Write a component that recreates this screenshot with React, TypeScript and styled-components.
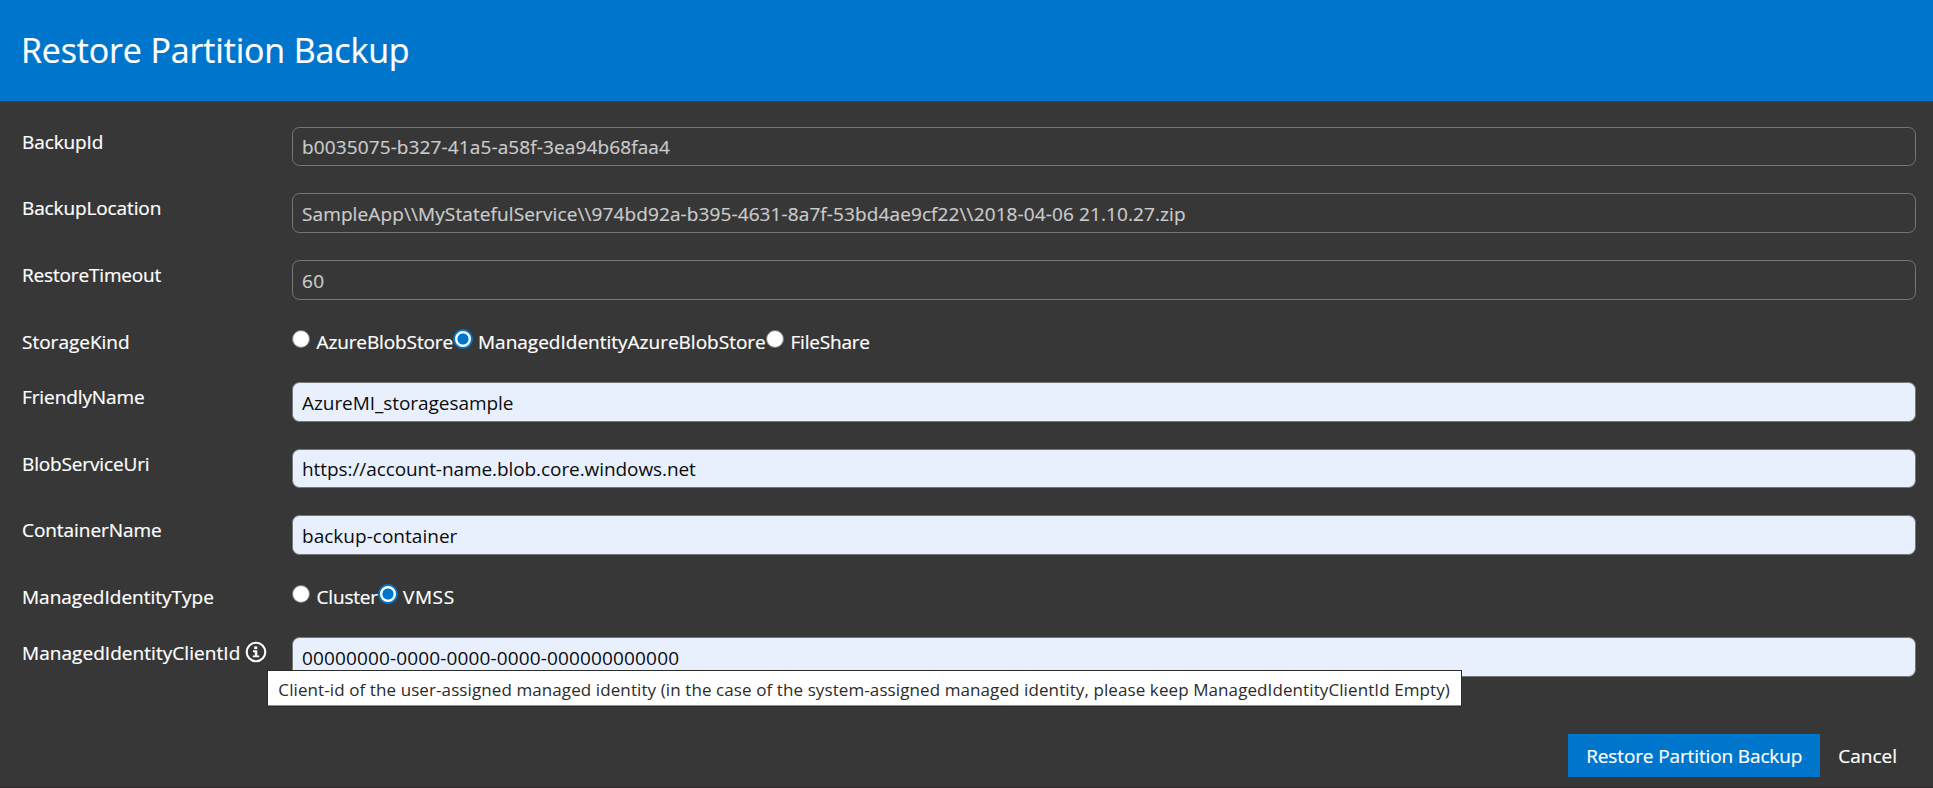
import React, { useState } from "react";
import styled, { createGlobalStyle } from "styled-components";

const GlobalStyle = createGlobalStyle`
  *, *::before, *::after { box-sizing: border-box; }
  body {
    margin: 0;
    background: #373737;
    color: #fff;
    font-family: "Segoe UI", "Open Sans", "Noto Sans", sans-serif;
    font-size: 19px;
    -webkit-text-stroke: 0.2px currentColor;
    overflow: hidden;
  }
`;

const Dialog = styled.main`
  display: flex;
  flex-direction: column;
  width: 100%;
  height: 788px;
  background: #373737;
  border-bottom: 1px solid #302e2f;
`;

const Header = styled.header`
  display: flex;
  align-items: center;
  flex: none;
  height: 101px;
  padding: 0 0 1px 21px;
  background: #0075cc;
`;

const Title = styled.h1`
  margin: 0;
  font-size: 34px;
  line-height: 46px;
  font-weight: 400;
  letter-spacing: -0.15px;
`;

const Form = styled.form`
  display: flex;
  flex: 1;
  flex-direction: column;
  padding: 26px 17px 10px 22px;
`;

const Row = styled.div<{ $height: number }>`
  display: grid;
  grid-template-columns: 270px 1fr;
  align-items: start;
  height: ${(p) => p.$height}px;
`;

const Label = styled.label<{ $tracking?: number; $top?: number }>`
  display: flex;
  align-items: center;
  gap: 5px;
  padding-top: ${(p) => p.$top ?? 1}px;
  line-height: 28px;
  letter-spacing: ${(p) => p.$tracking ?? 0}px;
  white-space: nowrap;
`;

const Input = styled.input<{ $tracking?: number; $height: number }>`
  width: 100%;
  height: ${(p) => p.$height}px;
  margin: 0;
  padding: ${(p) => (p.$height > 39 ? 1 : 0)}px 9px 0;
  border: 1px solid #767676;
  border-radius: 7.5px;
  background: #e8f0fe;
  color: #0c0c0c;
  font: inherit;
  letter-spacing: ${(p) => p.$tracking ?? 0}px;
  -webkit-text-stroke: 0;
  outline: none;

  &:disabled {
    background: transparent;
    border-color: #767676;
    color: #cbcbcb;
    -webkit-text-stroke: 0.2px currentColor;
  }
`;

const RadioGroup = styled.div`
  display: flex;
  align-items: flex-start;
`;

const RadioOption = styled.label<{ $width: number; $tracking?: number }>`
  display: flex;
  align-items: flex-start;
  width: ${(p) => p.$width}px;
  line-height: 28px;
  letter-spacing: ${(p) => p.$tracking ?? 0}px;
  white-space: nowrap;
`;

const RadioInput = styled.input`
  appearance: none;
  flex: none;
  width: 18px;
  height: 18px;
  margin: 3px 6.5px 0 0;
  border: 1px solid #767676;
  border-radius: 50%;
  background: #fff;

  &:checked {
    width: 20px;
    height: 20px;
    margin: 2px 5px 0 -1px;
    border: 2.5px solid #0075cc;
    background: radial-gradient(circle, #0075cc 5.2px, #fff 5.9px);
  }
`;

const RadioText = styled.span`
  padding-top: 1px;
`;

const InfoAnchor = styled.span`
  position: relative;
  display: flex;
  margin-top: -2px;
`;

const Tooltip = styled.span`
  position: absolute;
  top: 29px;
  left: 22px;
  z-index: 2;
  width: 1195px;
  height: 37px;
  padding: 0 0 0 10px;
  border: 1px solid #2b2b2b;
  box-shadow: inset 0 -1px 0 #8e8e8e;
  background: #fff;
  color: #2b2b2b;
  font-size: 17px;
  line-height: 37px;
  letter-spacing: 0.095px;
  -webkit-text-stroke: 0;
`;

const Footer = styled.footer`
  display: flex;
  justify-content: flex-end;
  margin: auto 1px 0 0;
`;

const Button = styled.button<{ $primary?: boolean }>`
  height: 43px;
  padding: 0 18px;
  border: 0;
  background: ${(p) => (p.$primary ? "#0075cc" : "transparent")};
  color: #fff;
  font: inherit;
  letter-spacing: ${(p) => (p.$primary ? -0.13 : 0)}px;
  white-space: nowrap;
`;

type FieldProps = {
  label: string;
  value: string;
  rowHeight: number;
  height?: number;
  tracking?: number;
  labelTop?: number;
  valueTracking?: number;
  disabled?: boolean;
  hint?: string;
};

const InfoIcon = () => (
  <svg width="22" height="22" viewBox="0 0 22 22" fill="none">
    <circle cx="11" cy="11" r="9.3" stroke="#fff" strokeWidth="2.1" />
    <rect x="9.2" y="5.4" width="3" height="2.7" fill="#fff" />
    <path d="M8 9.3h4.3v5.1h1.9v1.9H7.8v-1.9h2v-3.2H8z" fill="#fff" />
  </svg>
);

const Field = ({
  label, value, rowHeight, height = 40, tracking, labelTop, valueTracking, disabled, hint,
}: FieldProps) => (
  <Row $height={rowHeight}>
    <Label $tracking={tracking} $top={labelTop}>
      {label}
      {hint && (
        <InfoAnchor>
          <InfoIcon />
          <Tooltip role="tooltip">{hint}</Tooltip>
        </InfoAnchor>
      )}
    </Label>
    <Input
      $height={height}
      $tracking={valueTracking}
      defaultValue={value}
      disabled={disabled}
      spellCheck={false}
    />
  </Row>
);

type Option = { name: string; width: number; tracking?: number };

const RadioField = ({
  label, tracking, options, initial,
}: { label: string; tracking: number; options: Option[]; initial: string }) => {
  const [selected, setSelected] = useState(initial);
  return (
    <Row $height={55}>
      <Label $tracking={tracking}>{label}</Label>
      <RadioGroup>
        {options.map((o) => (
          <RadioOption key={o.name} $width={o.width} $tracking={o.tracking}>
            <RadioInput
              type="radio"
              name={label}
              checked={selected === o.name}
              onChange={() => setSelected(o.name)}
            />
            <RadioText>{o.name}</RadioText>
          </RadioOption>
        ))}
      </RadioGroup>
    </Row>
  );
};

const HINT =
  "Client-id of the user-assigned managed identity (in the case of the system-assigned managed identity, please keep ManagedIdentityClientId Empty)";

export default function App() {
  return (
    <>
      <GlobalStyle />
      <Dialog>
        <Header>
          <Title>Restore Partition Backup</Title>
        </Header>
        <Form onSubmit={(e) => e.preventDefault()}>
          <Field label="BackupId" tracking={-0.1} value="b0035075-b327-41a5-a58f-3ea94b68faa4" rowHeight={66} height={39} valueTracking={0.12} disabled />
          <Field
            label="BackupLocation"
            tracking={-0.12}
            value={"SampleApp\\\\MyStatefulService\\\\974bd92a-b395-4631-8a7f-53bd4ae9cf22\\\\2018-04-06 21.10.27.zip"}
            rowHeight={67}
            valueTracking={0.108}
            disabled
          />
          <Field label="RestoreTimeout" tracking={-0.16} value="60" rowHeight={67} valueTracking={0.3} disabled />
          <RadioField
            label="StorageKind"
            tracking={0}
            initial="ManagedIdentityAzureBlobStore"
            options={[
              { name: "AzureBlobStore", width: 162, tracking: -0.117 },
              { name: "ManagedIdentityAzureBlobStore", width: 312 },
              { name: "FileShare", width: 104, tracking: -0.2 },
            ]}
          />
          <Field label="FriendlyName" tracking={-0.1} value="AzureMI_storagesample" rowHeight={67} valueTracking={-0.06} />
          <Field label="BlobServiceUri" tracking={-0.14} value="https://account-name.blob.core.windows.net" rowHeight={66} height={39} valueTracking={-0.08} />
          <Field label="ContainerName" tracking={-0.06} value="backup-container" rowHeight={67} valueTracking={0.02} />
          <RadioField
            label="ManagedIdentityType"
            tracking={0}
            initial="VMSS"
            options={[
              { name: "Cluster", width: 87, tracking: -0.18 },
              { name: "VMSS", width: 80, tracking: 0.6 },
            ]}
          />
          <Field label="ManagedIdentityClientId" labelTop={2} tracking={0.05} value="00000000-0000-0000-0000-000000000000" rowHeight={67} valueTracking={0.14} hint={HINT} />
          <Footer>
            <Button $primary type="submit">Restore Partition Backup</Button>
            <Button type="button">Cancel</Button>
          </Footer>
        </Form>
      </Dialog>
    </>
  );
}
